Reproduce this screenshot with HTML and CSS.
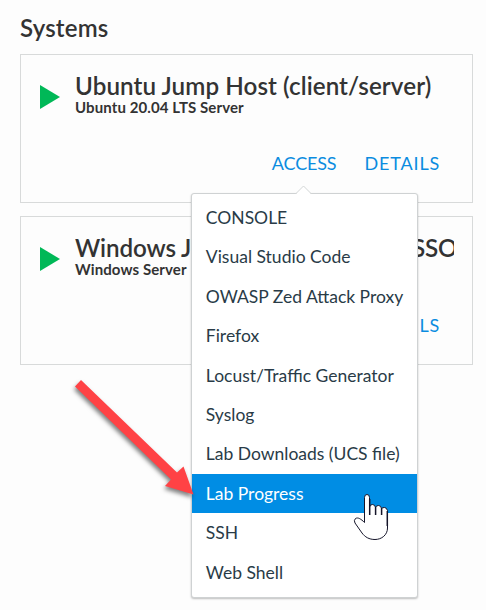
FILE: index.html
```html
<!DOCTYPE html>
<html lang="en">
<head>
<meta charset="utf-8">
<title>Systems</title>
<link rel="stylesheet" href="styles.css">
</head>
<body>
<main class="page">
  <h1 class="heading">Systems</h1>
  <section class="card">
    <svg class="play" width="20" height="24" viewBox="0 0 20 24"><path d="M0 0 20 12 0 24Z"/></svg>
    <div class="info">
      <h2 class="title">Ubuntu Jump Host (client/server)</h2>
      <p class="subtitle">Ubuntu 20.04 LTS Server</p>
      <div class="actions">
        <div class="access"><a class="link">ACCESS</a>
          <div class="menu">
            <svg class="caret" width="18" height="10" viewBox="0 0 18 10"><path d="M1 9 8.500 1.500 16 9V10H1Z" fill="#fff"/><path d="M.5 9 8.500 1 16.500 9" fill="none" stroke="#d3d6d6"/></svg>
            <ul class="list">
              <li class="item">CONSOLE</li>
              <li class="item">Visual Studio Code</li>
              <li class="item">OWASP Zed Attack Proxy</li>
              <li class="item">Firefox</li>
              <li class="item">Locust/Traffic Generator</li>
              <li class="item">Syslog</li>
              <li class="item">Lab Downloads (UCS file)</li>
              <li class="item active">Lab Progress</li>
              <li class="item">SSH</li>
              <li class="item">Web Shell</li>
            </ul>
          </div>
        </div>
        <a class="link details">DETAILS</a>
      </div>
    </div>
  </section>
  <section class="card">
    <svg class="play" width="20" height="24" viewBox="0 0 20 24"><path d="M0 0 20 12 0 24Z"/></svg>
    <div class="info">
      <h2 class="title clipped">Windows Jump Host (for client/SSO)</h2>
      <p class="subtitle">Windows Server</p>
      <div class="actions"><a class="link">ACCESS</a><a class="link details">DETAILS</a></div>
    </div>
  </section>
</main>
<svg class="arrow" width="140" height="135" viewBox="65 370 140 135"><path d="M81 380 177 472.500 183.500 466.500 193.500 494.500 165 486 171 479.500 75 386.500Z"/></svg>
<svg class="cursor" width="38" height="50" viewBox="352 492 38 50"><path d="M364.500 522.500V497.500Q364.500 494.500 367 494.500T369.500 497.500V507Q370 504.500 372.500 504.500T375.500 507.500Q376 505.500 378.500 505.500T381.500 508.500Q382.500 507.500 384.500 507.500T387.500 510.500V528C387.500 535 381.500 539.500 375 539.500C369 539.500 365 537 362 533L355 523Q353.500 520.500 355.500 518.500C358 517 361 519 364.500 522.500Z" fill="#fff" stroke="#15152a"/><path d="M369.700 499V515M375.600 507V515M381.600 508V515M387.300 511V526" fill="none" stroke="#15152a" stroke-width="1.500"/></svg>
</body>
</html>
```
FILE: styles.css
```css
* { box-sizing: border-box; }
body { margin: 0; background: #fdfdfd; color: #333; font-family: Lato, "Liberation Sans", sans-serif; height: 610px; overflow: hidden; position: relative; }
.page { padding: 13px 13px 0 20px; }
h1, h2, p, ul { margin: 0; padding: 0; }
.heading { font-size: 24px; line-height: 30px; font-weight: 600; letter-spacing: .2px; margin-bottom: 11px; }
.card { width: 453px; height: 149px; border: 1px solid #d8dada; margin-bottom: 13px; padding: 16px 18px 0 19px; display: flex; }
.play { margin-top: 14px; margin-right: 15px; fill: #00b857; flex: none; }
.info { flex: 1; min-width: 0; }
.title { font-size: 24.200px; line-height: 29px; font-weight: 600; letter-spacing: .08px; white-space: nowrap; overflow: hidden; }
.clipped { letter-spacing: -.1px; }
.subtitle { font-size: 15px; line-height: 14px; font-weight: 700; letter-spacing: .1px; }
.actions { display: flex; justify-content: flex-end; gap: 28px; padding: 36px 14px 0 0; }
.link { color: #0b8ce0; font-size: 18px; line-height: 26px; letter-spacing: -.15px; }
.details { letter-spacing: .85px; margin-right: -.15px; }
.access { position: relative; }
.menu { position: absolute; z-index: 2; left: -81px; top: 43px; width: 227px; height: 405px; background: #fff; border: 1px solid #cfd2d3; border-radius: 3px; box-shadow: 0 1px 2px rgba(0,0,0,.25); padding-top: 4px; }
.caret { position: absolute; left: 103px; top: -9px; }
.list { list-style: none; }
.item { height: 39.400px; line-height: 39px; padding-left: 14px; font-size: 17.500px; color: #293b47; white-space: nowrap; }
.active { background: #008de4; color: #fff; }
.arrow { position: absolute; z-index: 3; left: 65px; top: 370px; fill: #ff4245; filter: drop-shadow(-1px 3px 2px rgba(0,0,0,.5)); }
.cursor { position: absolute; z-index: 4; left: 352px; top: 492px; }
```
